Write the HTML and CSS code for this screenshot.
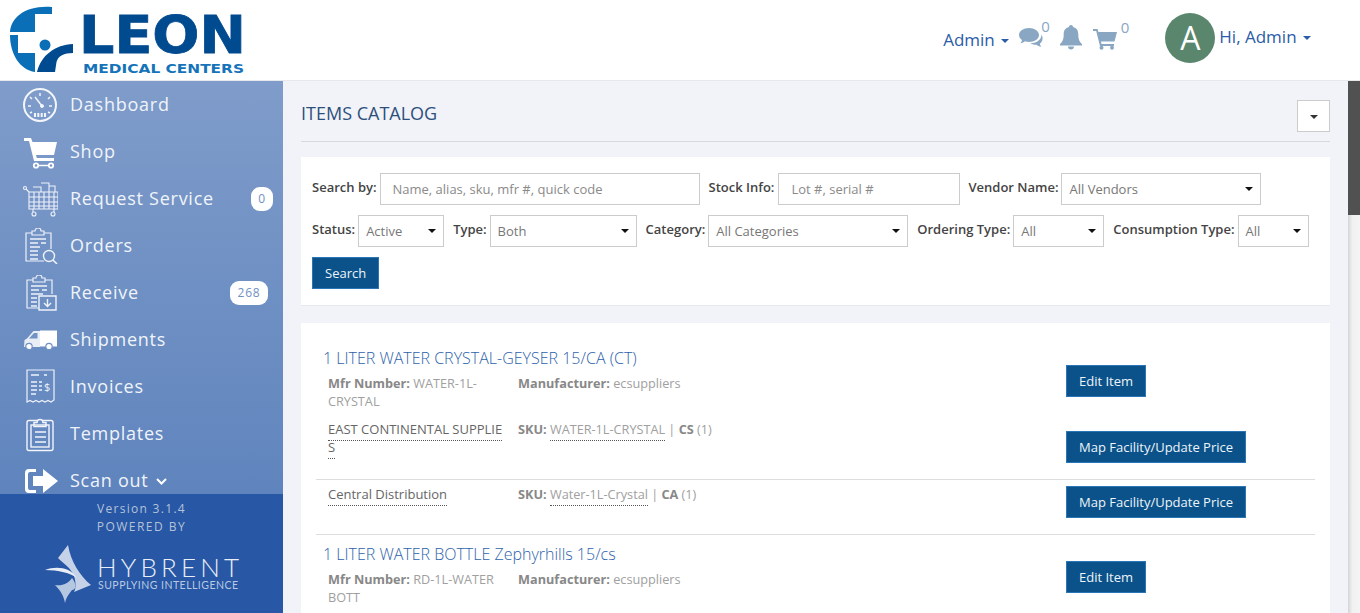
FILE: index.html
```html
<!DOCTYPE html>
<html lang="en">
<head>
    <meta charset="UTF-8">
    <title>Items Catalog</title>
    <link rel="stylesheet" href="styles.css">
</head>
<body>
<header id="header">
    <svg class="logo" width="250" height="80" viewBox="0 0 250 80">
        <path d="M10 32 C11 17 26 5 52 7 L52 14 L35 14 L35 32 Z" fill="#0b6fb8"/>
        <path d="M10 35 L18 35 L18 53 L35 53 L35 72 C20 70 10 54 10 35 Z" fill="#0b6fb8"/>
        <circle cx="45" cy="45" r="5.500" fill="#0b6fb8"/>
        <path d="M37 72 C39 64 43 57 50 52 C56 47 64 44.500 73 44 L73 53 C64 53 58 56 56.500 62 L55 72 Z" fill="#004a8f"/>
        <text class="logo-big" x="79" y="53" textLength="167" lengthAdjust="spacingAndGlyphs">LEON</text>
        <text class="logo-small" x="83" y="73" textLength="161" lengthAdjust="spacingAndGlyphs">MEDICAL CENTERS</text>
    </svg>
    <nav class="top-nav">
        <a class="top-link admin-link">Admin <i class="caret"></i></a>
        <svg class="top-icon chat-icon" width="26" height="22" viewBox="0 0 26 22"><path d="M10 1C4.500 1 0 4 0 8c0 2 1.200 3.700 3 5-.2 1.200-.8 2.300-1.600 3.200 1.800-.2 3.400-.9 4.600-1.900 1.200.4 2.600.7 4 .7 5.500 0 10-3.100 10-7S15.500 1 10 1z" fill="#89a7c3"/><path d="M22.500 7.500c.2 4.500-4.500 9-11 8.800 1.800 1.200 4 1.700 6 1.400 1.300 1 2.800 1.800 4.800 2-.8-1-1.300-2-1.500-3 2.700-1.600 3.800-5.600 1.700-9.200z" fill="#89a7c3"/></svg>
        <sup class="count chat-count">0</sup>
        <svg class="top-icon bell-icon" width="24" height="25" viewBox="0 0 24 25"><path d="M12 0c1.200 0 2 .9 2 2 3.700.8 5.300 3.600 5.300 7.500 0 5 1.200 7.300 3.700 9.500v1.500H1V19c2.500-2.200 3.700-4.500 3.700-9.500C4.700 5.600 6.300 2.800 10 2c0-1.100.8-2 2-2zM9 21.500h6c0 1.700-1.300 3-3 3s-3-1.300-3-3z" fill="#89a7c3"/></svg>
        <svg class="top-icon cart-icon" width="24" height="22" viewBox="0 0 24 22"><path d="M0 1h4.500l1 3H24l-2.500 9.500H8l.5 2.500H21v2H7L3.200 3H0z" fill="#89a7c3"/><circle cx="8.500" cy="19.800" r="2" fill="#89a7c3"/><circle cx="19" cy="19.800" r="2" fill="#89a7c3"/></svg>
        <sup class="count cart-count">0</sup>
        <span class="avatar">A</span>
        <a class="top-link hi-link">Hi, Admin <i class="caret"></i></a>
    </nav>
</header>
<div id="wrap">
    <aside id="sidebar">
        <ul class="menu">
            <li>
                <svg class="mi" width="36" height="36" viewBox="0 0 36 36" fill="none" stroke="#f2f5fa"><circle cx="18" cy="18" r="16" stroke-width="2"/><path d="M18 6v3M8 10l2 2M28 10l-2 2M6 19h3M27 19h3M8 26l2-1M28 26l-2-1M13 10l7 9" stroke-width="1.500"/><circle cx="20" cy="19" r="1.500" fill="#f2f5fa"/><path d="M13 26v4M16.300 26v4M19.700 26v4M23 26v4" stroke-width="2"/></svg>
                <span>Dashboard</span>
            </li>
            <li>
                <svg class="mi" width="36" height="36" viewBox="0 0 36 36"><path d="M2 4h7l1.500 4H35l-3 13H14l.8 3H32v3H12L7 7H2z" fill="#fff"/><circle cx="14" cy="31.500" r="2.200" fill="none" stroke="#fff" stroke-width="1.800"/><circle cx="29" cy="31.500" r="2.200" fill="none" stroke="#fff" stroke-width="1.800"/><path d="M16 31.500h11" stroke="#fff" stroke-width="1.500"/></svg>
                <span>Shop</span>
            </li>
            <li>
                <svg class="mi" width="36" height="36" viewBox="0 0 36 36" fill="none" stroke="#eef2f9" stroke-width="1.100"><circle cx="3" cy="7" r="1.500"/><path d="M4 8l3 3M7 11h29v17H7zM7 16h29M7 21h29M7 25h29M12 11v17M17 11v17M22 11v17M27 11v17M32 11v17M11 28v3M32 28v3M11 6h8v5M19 2h8v9M27 5h6v6"/><circle cx="12" cy="33" r="2"/><circle cx="31" cy="33" r="2"/></svg>
                <span>Request Service</span>
                <b class="badge">0</b>
            </li>
            <li>
                <svg class="mi" width="36" height="36" viewBox="0 0 36 36" fill="none" stroke="#eef2f9" stroke-width="1.200"><path d="M22 33H4V5h6M22 5h7v16M10 3h3a3 3 0 0 1 6 0h3v4H10z"/><path d="M8 11h16M8 15h8M19 15h5M8 19h10M8 23h8M8 27h8M8 31h8" stroke-width="1.300"/><circle cx="27" cy="28" r="5.500" stroke-width="1.400"/><path d="M31 32l4 4" stroke-width="1.600"/></svg>
                <span>Orders</span>
            </li>
            <li>
                <svg class="mi" width="36" height="36" viewBox="0 0 36 36" fill="none" stroke="#eef2f9" stroke-width="1.200"><path d="M17 33H5V5h6M23 5h7v14M11 3h3a3 3 0 0 1 6 0h3v4H11z"/><path d="M9 11h16M9 15h8M20 15h5M9 19h12M9 23h6M9 27h6M9 31h6" stroke-width="1.300"/><path d="M17 21h17v14H17z" stroke-width="1.400"/><path d="M25.500 24v7M22 28l3.500 3.500L29 28" stroke-width="1.400"/></svg>
                <span>Receive</span>
                <b class="badge wide">268</b>
            </li>
            <li>
                <svg class="mi truck" width="36" height="24" viewBox="0 0 36 24"><path d="M18 3H11.500L5 10.500 2.500 12 2 19h16z" fill="#e8edf6"/><path d="M18 2.500h17v16H18z" fill="#fff"/><path d="M12 5h3.500v5.500H7z" fill="#7092c4"/><circle cx="7" cy="18.500" r="3.200" fill="#fff" stroke="#7092c4" stroke-width="1.200"/><circle cx="27" cy="18.500" r="3.200" fill="#fff" stroke="#7092c4" stroke-width="1.200"/></svg>
                <span>Shipments</span>
            </li>
            <li>
                <svg class="mi" width="36" height="36" viewBox="0 0 36 36" fill="none" stroke="#eef2f9"><path d="M5 1h27v30l-3 2-3-1.500-3 1.500-3-1.500-3 1.500-3-1.500-3 1.500-3-1.500-3 1.500z" stroke-width="1.200"/><path d="M9 6h8M22 6h3M9 13h6M9 17h6M9 21h6M9 25h5M17 13h3M17 17h3M17 21h3" stroke-width="1.300"/><text class="dollar" x="22" y="22">$</text></svg>
                <span>Invoices</span>
            </li>
            <li>
                <svg class="mi" width="36" height="36" viewBox="0 0 36 36" fill="none" stroke="#f2f5fa" stroke-width="1.400"><rect x="5" y="4.500" width="26" height="30" rx="2"/><path d="M12 6.500h3a3 3 0 0 1 6 0h3v4H12z" fill="#6a8cc1"/><rect x="9" y="9" width="18" height="22"/><path d="M13 16h11M13 21h11M13 26h11"/></svg>
                <span>Templates</span>
            </li>
            <li>
                <svg class="mi" width="36" height="36" viewBox="0 0 36 36"><path d="M14 6H7a4 4 0 0 0-4 4v16a4 4 0 0 0 4 4h7v-3H8a2 2 0 0 1-2-2V11a2 2 0 0 1 2-2h6z" fill="#fff"/><path d="M21 6l15 12-15 12v-7H11V13h10z" fill="#fff"/></svg>
                <span>Scan out <svg class="chev" width="11" height="7" viewBox="0 0 11 7" fill="none" stroke="#fff" stroke-width="2"><path d="M1 1l4.500 4.500L10 1"/></svg></span>
            </li>
        </ul>
        <div class="side-foot">
            <p class="version">Version 3.1.4</p>
            <p class="powered">POWERED BY</p>
            <svg class="hybrent" width="210" height="64" viewBox="0 0 210 64">
                <path d="M24 5 L14 18 C20 24 27 28 30 36 C32 42 32 48 30 52 L47 45 C36 36 27 22 24 5z" fill="#c5d2e8"/>
                <path d="M11 45 C18 46 24 44 28 38 C33 44 32 50 28 50 C24 55 22 58 21 63 C20 56 16 50 11 45z" fill="#b6c7e2"/>
                <path d="M1 30 C12 26 26 27 33 38 C27 33 14 30 1 30z" fill="#e8edf6"/>
                <text class="hy-big" x="53" y="37" textLength="142">HYBRENT</text>
                <text class="hy-small" x="54" y="49" textLength="140">SUPPLYING INTELLIGENCE</text>
            </svg>
        </div>
    </aside>
    <main id="main">
        <div class="page-head">
            <h1>ITEMS CATALOG</h1>
            <button class="head-btn"><i class="caret dark"></i></button>
        </div>
        <section class="filters">
            <div class="filter-row">
                <label>Search by:</label>
                <div class="field w-320 placeholder">Name, alias, sku, mfr #, quick code</div>
                <label class="stock-label">Stock Info:</label>
                <div class="field w-182 placeholder">Lot #, serial #</div>
                <label class="vendor-label">Vendor Name:</label>
                <div class="field sel w-200">All Vendors<i class="arrow"></i></div>
            </div>
            <div class="filter-row">
                <label>Status:</label>
                <div class="field sel w-86">Active<i class="arrow"></i></div>
                <label>Type:</label>
                <div class="field sel w-147">Both<i class="arrow"></i></div>
                <label>Category:</label>
                <div class="field sel w-200">All Categories<i class="arrow"></i></div>
                <label>Ordering Type:</label>
                <div class="field sel w-91">All<i class="arrow"></i></div>
                <label>Consumption Type:</label>
                <div class="field sel w-71">All<i class="arrow"></i></div>
            </div>
            <button class="btn">Search</button>
        </section>
        <section class="items">
            <article class="item">
                <h2>1 LITER WATER CRYSTAL-GEYSER 15/CA (CT)</h2>
                <div class="row row-info">
                    <div class="c1"><b>Mfr Number:</b> <span>WATER-1L-</span> <span>CRYSTAL</span></div>
                    <div class="c2"><b>Manufacturer:</b> ecsuppliers</div>
                    <div class="c3"><button class="btn">Edit Item</button></div>
                </div>
                <div class="row row-vendor">
                    <div class="c1 vendor"><span class="dotted">EAST CONTINENTAL SUPPLIES</span></div>
                    <div class="c2"><b>SKU:</b> <span class="dotted">WATER-1L-CRYSTAL</span> | <b>CS</b> (1)</div>
                    <div class="c3"><button class="btn">Map Facility/Update Price</button></div>
                </div>
                <div class="row row-central">
                    <div class="c1 vendor"><span class="dotted">Central Distribution</span></div>
                    <div class="c2"><b>SKU:</b> <span class="dotted">Water-1L-Crystal</span> | <b>CA</b> (1)</div>
                    <div class="c3"><button class="btn">Map Facility/Update Price</button></div>
                </div>
            </article>
            <article class="item last">
                <h2>1 LITER WATER BOTTLE Zephyrhills 15/cs</h2>
                <div class="row row-info">
                    <div class="c1"><b>Mfr Number:</b> <span>RD-1L-WATER</span> <span>BOTT</span></div>
                    <div class="c2"><b>Manufacturer:</b> ecsuppliers</div>
                    <div class="c3"><button class="btn">Edit Item</button></div>
                </div>
            </article>
        </section>
    </main>
    <div id="scroll"><div class="thumb"></div></div>
</div>
</body>
</html>
```

FILE: styles.css
```css
*{
    margin: 0;
    padding: 0;
    box-sizing: border-box;
}
html, body{
    height: 613px;
    overflow: hidden;
}
body{
    display: flex;
    flex-direction: column;
    font-family: "Open Sans", "Liberation Sans", sans-serif;
    font-size: 13px;
    background: #f1f3f8;
}
ul{
    list-style: none;
}
button{
    font-family: inherit;
}

/* header */
#header{
    height: 81px;
    flex: none;
    display: flex;
    justify-content: space-between;
    background: #fff;
    border-bottom: 1px solid #e6e8ec;
}
.logo{
    display: block;
}
.logo-big{
    font-family: "DejaVu Sans", sans-serif;
    font-weight: 700;
    font-size: 52px;
    fill: #004a8f;
    stroke: #004a8f;
    stroke-width: .8px;
}
.logo-small{
    font-family: "DejaVu Sans", sans-serif;
    font-weight: 700;
    font-size: 12.500px;
    fill: #1573b9;
}
.top-nav{
    display: flex;
    align-items: flex-start;
    padding-right: 49px;
}
.top-link{
    color: #2a5ca8;
    font-size: 17px;
    white-space: nowrap;
}
.caret{
    display: inline-block;
    width: 0;
    height: 0;
    margin-left: 2px;
    vertical-align: 3px;
    border-top: 4px solid #2a5ca8;
    border-left: 4px solid transparent;
    border-right: 4px solid transparent;
}
.caret.dark{
    border-top-color: #333;
    margin: 0;
    vertical-align: 2px;
}
.admin-link{
    margin-top: 28px;
    margin-right: 10px;
}
.top-icon{
    flex: none;
}
.chat-icon{
    margin-top: 27px;
}
.count{
    color: #89a7c3;
    font-size: 15px;
    line-height: 19px;
    margin-top: 17px;
}
.chat-count{
    margin-right: 9px;
    margin-left: -4px;
}
.bell-icon{
    margin-top: 25px;
    margin-right: 10px;
}
.cart-icon{
    margin-top: 28px;
    margin-right: 4px;
}
.cart-count{
    margin-top: 18px;
    margin-right: 36px;
}
.avatar{
    width: 50px;
    height: 50px;
    margin-top: 13px;
    margin-right: 4px;
    border-radius: 50%;
    background: #5a866d;
    color: #fff;
    font-size: 32px;
    line-height: 50px;
    text-align: center;
}
.hi-link{
    margin-top: 25px;
}

/* sidebar */
#wrap{
    flex: 1;
    display: flex;
    min-height: 0;
}
#sidebar{
    width: 283px;
    flex: none;
    display: flex;
    flex-direction: column;
}
.menu{
    height: 413px;
    overflow: hidden;
    background: linear-gradient(#7f9cca, #5f84bd);
}
.menu li{
    height: 47px;
    display: flex;
    align-items: center;
    position: relative;
    padding-left: 22px;
    color: #f0f4fa;
    font-size: 18px;
    letter-spacing: .75px;
    white-space: nowrap;
}
.menu li > span{
    margin-bottom: 1px;
}
.mi{
    width: 36px;
    margin-right: 12px;
    flex: none;
}
.chev{
    margin-left: 2px;
    vertical-align: 2px;
}
.dollar{
    font-size: 11px;
    fill: #eef2f9;
    stroke: none;
}
.badge{
    position: absolute;
    top: 12px;
    right: 10px;
    width: 22px;
    height: 24px;
    border-radius: 9px;
    background: #fff;
    color: #6f90c3;
    font-size: 12px;
    font-weight: 400;
    line-height: 24px;
    text-align: center;
}
.badge.wide{
    right: 15px;
    width: 38px;
}
.side-foot{
    flex: 1;
    background: #2757a5;
    text-align: center;
    color: #b5c3d9;
    font-size: 12px;
    line-height: 18px;
    padding-top: 6px;
}
.version{
    letter-spacing: 1.300px;
}
.powered{
    letter-spacing: 1.500px;
}
.hybrent{
    display: block;
    margin: 4px 0 0 44px;
}
.hy-big{
    font-family: Lato, sans-serif;
    font-weight: 300;
    font-size: 26px;
    fill: #e8edf6;
}
.hy-small{
    font-family: Lato, sans-serif;
    font-size: 10.500px;
    fill: #b9c9e2;
}

/* main column */
#main{
    flex: 1;
    min-width: 0;
    padding: 0 18px;
    overflow: hidden;
}
.page-head{
    height: 61px;
    display: flex;
    align-items: center;
    justify-content: space-between;
    padding-top: 5px;
    border-bottom: 1px solid #d8d9dc;
}
.page-head h1{
    margin-bottom: 2px;
    font-size: 18px;
    font-weight: 400;
    color: #2d4f7c;
}
.head-btn{
    width: 33px;
    height: 32px;
    margin-top: 5px;
    background: #fff;
    border: 1px solid #ccc;
}
.filters{
    height: 149px;
    margin-top: 15px;
    padding: 16px 11px;
    background: #fff;
    border-bottom: 1px solid #e7e9ee;
}
.filter-row{
    display: flex;
    align-items: center;
    margin-bottom: 10px;
}
.filter-row label{
    font-weight: 600;
    font-size: 13px;
    color: #444;
    margin-right: 3px;
    margin-left: 9px;
    position: relative;
    top: -2px;
}
.filter-row label:first-child{
    margin-left: 0;
}
.filter-row .stock-label{
    margin-right: 4px;
}
.filter-row .vendor-label{
    margin-left: 8px;
}
.field{
    height: 32px;
    flex: none;
    display: flex;
    align-items: center;
    justify-content: space-between;
    padding: 0 7px 0 7px;
    background: #fff;
    border: 1px solid #ccc;
    color: #777;
    font-size: 13px;
}
.placeholder{
    padding-left: 12px;
    color: #8a8a8a;
}
.arrow{
    width: 0;
    height: 0;
    border-top: 4px solid #111;
    border-left: 4px solid transparent;
    border-right: 4px solid transparent;
}
.w-320{ width: 320px; }
.w-182{ width: 182px; }
.w-200{ width: 200px; }
.w-86{ width: 86px; }
.w-147{ width: 147px; }
.w-91{ width: 91px; }
.w-71{ width: 71px; }
.btn{
    height: 32px;
    padding: 0 12px;
    background: #0a5289;
    border: 1px solid #2a75b5;
    color: #eef4fa;
    font-size: 13px;
    font-weight: 400;
    white-space: nowrap;
}
.filters .btn{
    display: block;
    margin-top: 10px;
}

/* catalog list */
.items{
    height: 400px;
    margin-top: 17px;
    padding: 23px 15px 0;
    background: #fff;
    color: #a0a0a0;
    font-size: 12.700px;
    line-height: 18px;
}
.item{
    border-bottom: 1px solid #ddd;
    padding-bottom: 16px;
}
.item.last{
    border-bottom: 0;
}
.item + .item{
    padding-top: 7px;
}
.item h2{
    padding-left: 7px;
    font-size: 16px;
    font-weight: 300;
    color: #2d62ac;
    line-height: 24px;
}
.row{
    display: flex;
}
.c1{
    width: 190px;
    padding-left: 12px;
    padding-right: 12px;
    flex: none;
}
.c2{
    width: 560px;
    padding-left: 12px;
    flex: none;
}
.row b{
    font-weight: 700;
    color: #888;
}
.row-info{
    height: 45px;
    margin-top: 4px;
}
.row-info .c3{
    margin-top: -9px;
}
.row-vendor{
    height: 61px;
    padding-top: 1px;
    border-bottom: 1px solid #ddd;
}
.row-vendor .c3{
    margin-top: 11px;
    margin-bottom: -1px;
}
.row-central{
    height: 38px;
    padding-top: 5px;
}
.row-central .c3{
    margin-top: 1px;
}
.vendor{
    color: #666;
    font-size: 13px;
    word-break: break-all;
    padding-right: 2px;
}
.dotted{
    border-bottom: 1px dotted #555;
    padding-bottom: 2px;
}

#scroll{
    width: 12px;
    flex: none;
    background: linear-gradient(90deg, #d4d4d4, #f1f1f1 35%, #f4f4f4);
}
.thumb{
    height: 134px;
    background: #515151;
}
```
